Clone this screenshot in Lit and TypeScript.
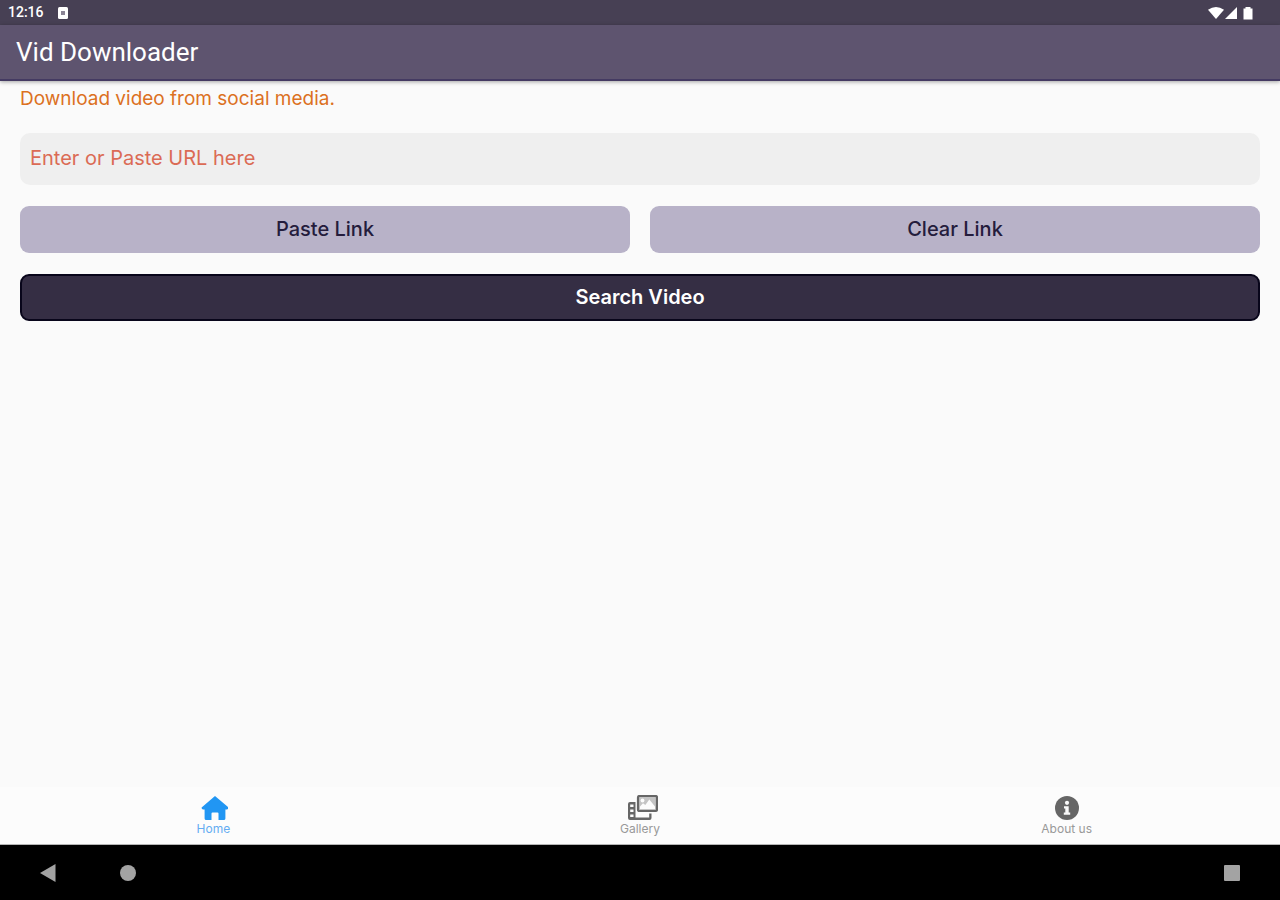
import { LitElement, html, css, svg } from "lit";
import { customElement, state, query } from "lit/decorators.js";

const homeIcon = svg`<svg class="icon" viewBox="-2 0 30 26" aria-hidden="true">
  <path fill="currentColor" d="M15 1 1.600 12.400Q1.400 14.500 3.200 14.500H4.600v8.900Q4.600 25 6.200 25H11.500v-6.500q0-1 1-1h5q1 0 1 1v6.500h5.300q1.600 0 1.600-1.600V14.500h1.400q1.800 0 1.600-2.100Z" transform="translate(0 0)"/>
</svg>`;

const galleryIcon = svg`<svg class="icon wide" viewBox="0 0 36 26" aria-hidden="true">
  <rect x="16" y="1" width="19" height="15" rx="1.500" fill="#c4c4c4" stroke="currentColor" stroke-width="2.200"/>
  <circle cx="20.500" cy="5.500" r="1.900" fill="#fcfcfc"/>
  <path fill="#fcfcfc" d="M18 14v-2.500l3-3.300 2.300 1.800 4-5.500 5.700 7V14Z"/>
  <path fill="currentColor" fill-rule="evenodd" d="M13.500 7H8Q6 7 6 9v14q0 2 2 2h19.500q2 0 2-2v-4.500h-2.300V22.500h-13.700ZM8.200 9.500h3.300v2.600H8.200Zm0 5h3.300v2.600H8.200Zm0 5h3.300v2.600H8.200Z"/>
</svg>`;

const infoIcon = svg`<svg class="icon" viewBox="0 0 30 26" aria-hidden="true">
  <circle cx="15" cy="13" r="12" fill="currentColor"/>
  <circle cx="15" cy="7.800" r="2.100" fill="#fafafa"/>
  <path fill="#fafafa" d="M12 11.300h4.700v6.200h1.500v2.300h-6.400v-2.300h1.500v-3.900H12Z"/>
</svg>`;

const tabs = [
  { id: "home", label: "Home", icon: homeIcon },
  { id: "gallery", label: "Gallery", icon: galleryIcon },
  { id: "about", label: "About us", icon: infoIcon },
];

@customElement("app-root")
export class AppRoot extends LitElement {
  @state() private active = "home";
  @query(".url") private field!: HTMLInputElement;

  static styles = css`
    :host {
      display: flex;
      flex-direction: column;
      min-height: 100vh;
      background: #fafafa;
      font-family: Inter, "Noto Sans", sans-serif;
    }
    button,
    input {
      font-family: inherit;
      margin: 0;
      border: 0;
      box-sizing: border-box;
    }
    button {
      cursor: pointer;
    }
    .status {
      display: flex;
      align-items: center;
      height: 25px;
      padding: 0 26px 0 8px;
      background: #474054;
      color: #fff;
      font: 500 14px/25px Roboto, sans-serif;
    }
    .notice {
      width: 10px;
      height: 12px;
      margin-left: 14px;
    }
    .signals {
      width: 46px;
      height: 14px;
      margin-left: auto;
    }
    .appbar {
      z-index: 1;
      padding: 0 16px;
      background: #5e546f;
      border-bottom: 2px solid #443a62;
      box-shadow: 0 1px 4px rgba(0, 0, 0, 0.35);
    }
    .title {
      margin: 0;
      color: #fff;
      font: 400 26px/54px Roboto, sans-serif;
    }
    .content {
      flex: 1;
      display: flex;
      flex-direction: column;
      gap: 21px;
      padding: 4px 20px 20px;
    }
    .intro {
      margin: 0;
      color: #dc711f;
      font-size: 19px;
      line-height: 27px;
    }
    .url {
      width: 100%;
      height: 52px;
      padding: 0 10px 2px;
      border-radius: 10px;
      background: #efefef;
      color: #352e44;
      font-size: 20px;
    }
    .url::placeholder {
      color: #db6b55;
      opacity: 1;
    }
    .pair {
      display: grid;
      grid-template-columns: 1fr 1fr;
      gap: 20px;
    }
    .action {
      height: 47px;
      padding: 0 10px 2px;
      border-radius: 9px;
      background: #b8b2c8;
      color: #241c3c;
      font-size: 20px;
      font-weight: 500;
    }
    .primary {
      border: 2px solid #08051a;
      background: #352e44;
      color: #fff;
      font-weight: 600;
    }
    .tabs {
      display: grid;
      grid-template-columns: repeat(3, 1fr);
      background: #fcfcfc;
      border-bottom: 1px solid #b5b5b5;
    }
    .tab {
      display: flex;
      flex-direction: column;
      align-items: center;
      padding: 8px 0 7px;
      background: none;
      color: #666;
      font-size: 12px;
      line-height: 16px;
    }
    .label {
      color: #999;
    }
    .icon {
      width: 30px;
      height: 26px;
    }
    .wide {
      width: 36px;
    }
    .active {
      color: #2196f3;
    }
    .active .label {
      color: #64acf2;
    }
    .system {
      display: flex;
      align-items: center;
      gap: 60px;
      height: 55px;
      padding: 0 38px;
      background: #000;
    }
    .key {
      width: 20px;
      height: 20px;
      padding: 0;
      background: none;
      color: #a3a3a3;
    }
    .key svg {
      display: block;
    }
    .recent {
      margin-left: auto;
    }
  `;

  private async paste() {
    this.field.value = await navigator.clipboard.readText();
  }

  private clear() {
    this.field.value = "";
  }

  render() {
    return html`
      <div class="status">
        <span>12:16</span>
        <svg class="notice" viewBox="0 0 10 12" aria-hidden="true">
          <rect width="10" height="12" rx="1.500" fill="#fff" />
          <rect x="3" y="4" width="4" height="4" fill="#8b8596" />
        </svg>
        <svg class="signals" viewBox="0 0 46 14" aria-hidden="true">
          <path fill="#fff" d="M0 3.800Q8 -1.800 16 3.800L8 13Z" />
          <path fill="#fff" d="M29 1v12H17Z" />
          <path fill="#fff" d="M35.500 2.500h2V1h5v1.500h2V13.500h-9Z" />
        </svg>
      </div>
      <header class="appbar"><h1 class="title">Vid Downloader</h1></header>
      <main class="content">
        <p class="intro">Download video from social media.</p>
        <input class="url" type="url" aria-label="Video URL" placeholder="Enter or Paste URL here" />
        <div class="pair">
          <button class="action" @click=${this.paste}>Paste Link</button>
          <button class="action" @click=${this.clear}>Clear Link</button>
        </div>
        <button class="action primary">Search Video</button>
      </main>
      <nav class="tabs">
        ${tabs.map(
          (t) => html`<button
            class="tab ${t.id === this.active ? "active" : ""}"
            @click=${() => (this.active = t.id)}
          >
            ${t.icon}<span class="label">${t.label}</span>
          </button>`
        )}
      </nav>
      <div class="system">
        <button class="key" aria-label="Back">
          <svg viewBox="0 0 20 20"><path fill="currentColor" d="M2 10 17.500 1v18Z" /></svg>
        </button>
        <button class="key" aria-label="Home screen">
          <svg viewBox="0 0 20 20"><circle cx="10" cy="10" r="8" fill="currentColor" /></svg>
        </button>
        <button class="key recent" aria-label="Recent apps">
          <svg viewBox="0 0 20 20"><rect x="2" y="2" width="16" height="16" rx="1" fill="currentColor" /></svg>
        </button>
      </div>
    `;
  }
}
